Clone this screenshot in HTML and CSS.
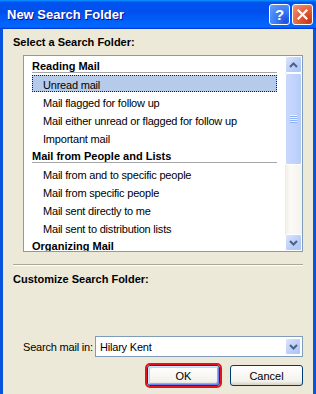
FILE: index.html
```html
<!DOCTYPE html>
<html lang="en">
<head>
  <meta charset="UTF-8" />
  <meta name="viewport" content="width=device-width, initial-scale=1.0"/>
  <title>New Search Folder</title>
  <link rel="stylesheet" href="styles.css">
</head>
<body>
  <div class="window">
    <div class="titlebar">
      <span class="title">New Search Folder</span>
      <div class="title-buttons">
        <div class="title-btn help">?</div>
        <div class="title-btn close">
          <svg width="11" height="11" viewBox="0 0 11 11">
            <path d="M1.5 1.5 L9.5 9.5 M9.5 1.5 L1.5 9.5" stroke="#fff" stroke-width="2.2" stroke-linecap="square"/>
          </svg>
        </div>
      </div>
    </div>

    <div class="content">
      <div class="group-label">Select a Search Folder:</div>

      <div class="listbox">
        <div class="list">
          <div class="cat">Reading Mail</div>
          <div class="item selected">Unread mail</div>
          <div class="item">Mail flagged for follow up</div>
          <div class="item">Mail either unread or flagged for follow up</div>
          <div class="item">Important mail</div>
          <div class="cat">Mail from People and Lists</div>
          <div class="item">Mail from and to specific people</div>
          <div class="item">Mail from specific people</div>
          <div class="item">Mail sent directly to me</div>
          <div class="item">Mail sent to distribution lists</div>
          <div class="cat">Organizing Mail</div>
        </div>
        <div class="scrollbar">
          <div class="sb-btn">
            <svg width="9" height="6" viewBox="0 0 9 6"><path d="M1 5 L4.5 1.5 L8 5" fill="none" stroke="#4D6185" stroke-width="2"/></svg>
          </div>
          <div class="sb-track">
            <div class="sb-thumb"><div class="grip"></div></div>
          </div>
          <div class="sb-btn">
            <svg width="9" height="6" viewBox="0 0 9 6"><path d="M1 1 L4.5 4.5 L8 1" fill="none" stroke="#4D6185" stroke-width="2"/></svg>
          </div>
        </div>
      </div>

      <div class="separator"></div>

      <div class="group-label second">Customize Search Folder:</div>

      <div class="search-row">
        <span class="search-label">Search mail in:</span>
        <div class="combo">
          <span class="combo-text">Hilary Kent</span>
          <div class="combo-btn">
            <svg width="9" height="6" viewBox="0 0 9 6"><path d="M1 1 L4.5 4.5 L8 1" fill="none" stroke="#4D6185" stroke-width="2"/></svg>
          </div>
        </div>
      </div>

      <div class="buttons">
        <button class="btn default">OK</button>
        <button class="btn">Cancel</button>
      </div>
    </div>
  </div>
</body>
</html>
```

FILE: styles.css
```css
body {
  margin: 0;
  font-family: "Liberation Sans", Arial, sans-serif;
  font-size: 11px;
  color: #000;
  background-color: #ECE9D8;
}

.window {
  width: 316px;
  height: 394px;
  display: flex;
  flex-direction: column;
  overflow: hidden;
}

.titlebar {
  height: 29px;
  flex: none;
  display: flex;
  align-items: center;
  justify-content: space-between;
  padding: 0 3px 0 7px;
  background: linear-gradient(180deg, #0997ff, #0053ee 8%, #0050ee 40%, #0066ff 88%, #0066ff 93%, #005bff 95%, #003dd7 96%, #003dd7);
}

.title {
  color: #fff;
  font-weight: bold;
  font-size: 13px;
  text-shadow: 1px 1px #0f1089;
}

.title-buttons {
  display: flex;
  gap: 2px;
}

.title-btn {
  width: 21px;
  height: 21px;
  box-sizing: border-box;
  border: 1px solid #fff;
  border-radius: 3px;
  display: flex;
  align-items: center;
  justify-content: center;
  color: #fff;
  font-weight: bold;
  font-size: 15px;
}

.help {
  background: radial-gradient(circle at 85% 85%, #1c4fe0 0%, #3a7cf4 45%, #6a9ef9 100%);
}

.close {
  background: radial-gradient(circle at 85% 85%, #c43a1b 0%, #e25a36 45%, #f0997d 100%);
}

.content {
  flex: 1;
  display: flex;
  flex-direction: column;
  padding: 7px 10px 0;
  border-left: 3px solid #0855dd;
  border-right: 3px solid #0855dd;
}

.group-label {
  font-weight: bold;
  line-height: 13px;
}

.group-label.second {
  margin-top: 7px;
}

.listbox {
  margin: 6px 0 0 10px;
  height: 197px;
  box-sizing: border-box;
  border: 1px solid #7f9db9;
  background-color: #fff;
  display: flex;
}

.list {
  flex: 1;
  overflow: hidden;
  padding: 0 8px;
}

.cat {
  font-weight: bold;
  height: 16px;
  line-height: 20px;
  border-bottom: 1px solid #a7a6aa;
  margin-bottom: 2px;
}

.item {
  height: 17px;
  line-height: 20px;
  margin-top: 1px;
  padding-left: 11px;
  letter-spacing: -0.2px;
}

.item.selected {
  background-color: #b6cbea;
  outline: 1px dotted #222;
  outline-offset: -1px;
}

.scrollbar {
  width: 17px;
  display: flex;
  flex-direction: column;
  background: linear-gradient(to right, #eeede5, #fbfaf6 30%, #f4f3ee);
}

.sb-btn {
  height: 17px;
  box-sizing: border-box;
  border: 1px solid #fff;
  border-radius: 2px;
  background: linear-gradient(135deg, #dbe5fd, #b9cdfa 60%, #aec4f6);
  display: flex;
  align-items: center;
  justify-content: center;
}

.sb-track {
  flex: 1;
}

.sb-thumb {
  height: 92px;
  box-sizing: border-box;
  border: 1px solid #fff;
  border-radius: 2px;
  background: linear-gradient(to right, #c9d8fc, #c2d4fc 50%, #b6cbf9);
  display: flex;
  align-items: center;
  justify-content: center;
}

.grip {
  width: 7px;
  height: 8px;
  background: repeating-linear-gradient(to bottom, #eef4fe 0 1px, #8cb0f8 1px 2px);
}

.separator {
  margin-top: 12px;
  border-top: 1px solid #aca899;
  border-bottom: 1px solid #fff;
}

.search-row {
  margin: 50px 0 0 10px;
  display: flex;
  align-items: center;
}

.search-label {
  white-space: nowrap;
  letter-spacing: -0.2px;
}

.combo {
  flex: none;
  margin-left: auto;
  width: 208px;
  height: 21px;
  box-sizing: border-box;
  border: 1px solid #7f9db9;
  background-color: #fff;
  display: flex;
  align-items: center;
  padding: 1px;
}

.combo-text {
  flex: 1;
  padding-left: 3px;
  letter-spacing: -0.2px;
}

.combo-btn {
  width: 16px;
  height: 17px;
  box-sizing: border-box;
  border: 1px solid #fff;
  border-radius: 2px;
  background: linear-gradient(135deg, #dbe5fd, #b9cdfa 60%, #aec4f6);
  display: flex;
  align-items: center;
  justify-content: center;
}

.buttons {
  margin-top: 8px;
  display: flex;
  justify-content: flex-end;
  gap: 10px;
}

.btn {
  width: 73px;
  height: 21px;
  box-sizing: border-box;
  font-family: "Liberation Sans", Arial, sans-serif;
  font-size: 11px;
  color: #000;
  border: 1px solid #003c74;
  border-radius: 3px;
  background: linear-gradient(#ffffff, #f3f2ec 80%, #d6d0c5);
  padding: 0;
}

.btn.default {
  box-shadow: inset 1px 1px #cee7ff, inset -1px -1px #6982ee, inset 2px 2px #bcd4f6, inset -2px -2px #89adf0;
  outline: 2px solid #e3131b;
  outline-offset: 0;
}
```
